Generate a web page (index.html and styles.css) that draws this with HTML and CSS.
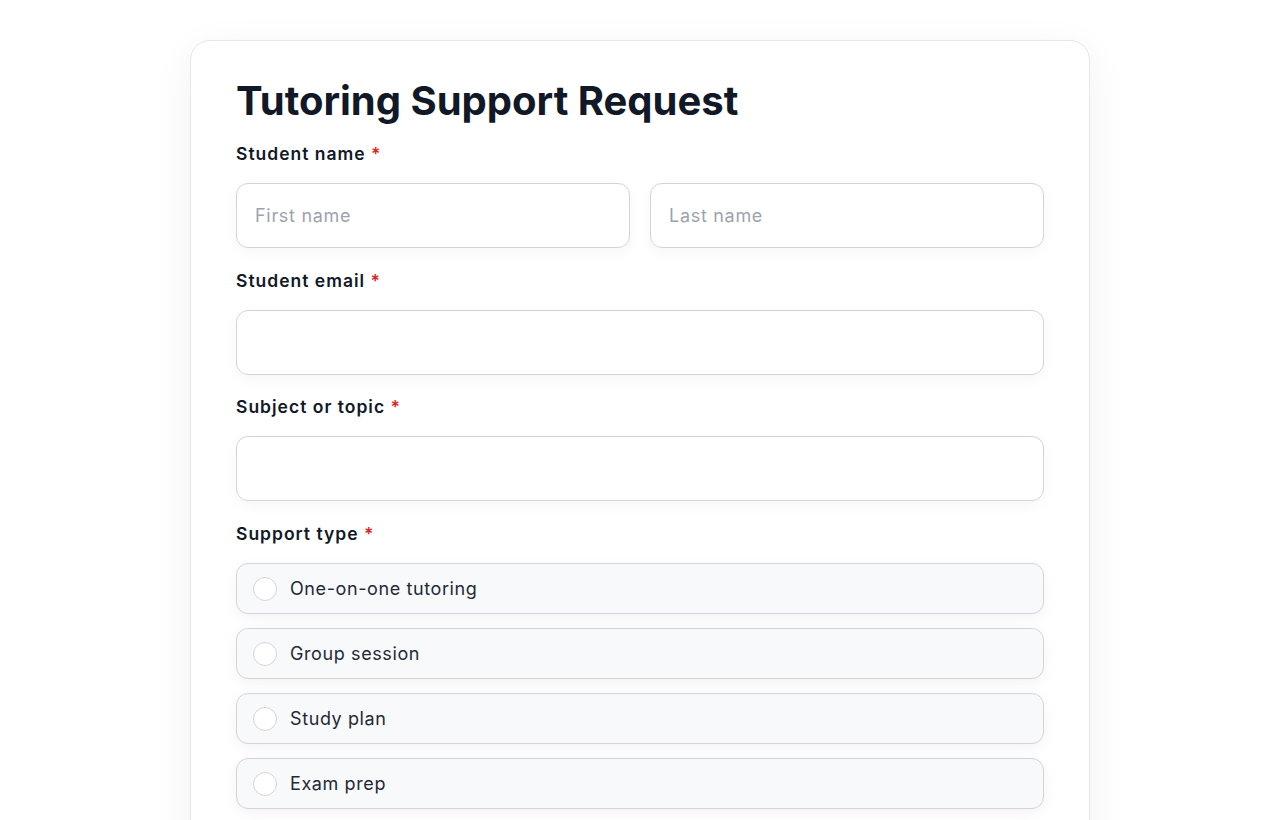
FILE: index.html
```html
<!DOCTYPE html>
<html lang="en">
<head>
  <meta charset="UTF-8" />
  <title>Tutoring Support Request</title>
  <link rel="stylesheet" href="styles.css">
</head>
<body>
  <div class="card">
    <h1>Tutoring Support Request</h1>

    <div class="field">
      <label class="label">Student name <span class="req">*</span></label>
      <div class="row">
        <input class="input" type="text" placeholder="First name">
        <input class="input" type="text" placeholder="Last name">
      </div>
    </div>

    <div class="field">
      <label class="label">Student email <span class="req">*</span></label>
      <input class="input" type="email">
    </div>

    <div class="field">
      <label class="label">Subject or topic <span class="req">*</span></label>
      <input class="input" type="text">
    </div>

    <div class="field">
      <label class="label">Support type <span class="req">*</span></label>
      <div class="options">
        <label class="option"><span class="radio"></span>One-on-one tutoring</label>
        <label class="option"><span class="radio"></span>Group session</label>
        <label class="option"><span class="radio"></span>Study plan</label>
        <label class="option"><span class="radio"></span>Exam prep</label>
      </div>
    </div>
  </div>
</body>
</html>
```

FILE: styles.css
```css
body {
  font-family: Inter, "Noto Sans", sans-serif;
  background-color: #ffffff;
  color: #111827;
  margin: 0;
  padding: 40px 0;
}

.card {
  width: 808px;
  margin: 0 auto;
  padding: 36px 45px 40px;
  background-color: #ffffff;
  border: 1px solid #e5e7eb;
  border-radius: 20px;
  box-shadow: 0 10px 40px rgba(17, 24, 39, 0.06);
}

h1 {
  font-size: 40px;
  line-height: 48px;
  font-weight: 700;
  margin: 0 0 18px;
  color: #111827;
}

.field {
  margin-bottom: 22px;
}

.field:nth-child(3) {
  margin-bottom: 21px;
}

.label {
  display: block;
  font-size: 17.5px;
  line-height: 22px;
  font-weight: 600;
  letter-spacing: 1px;
  margin-bottom: 18px;
  color: #111827;
}

.req {
  color: #dc2626;
}

.row {
  display: flex;
  gap: 20px;
}

.input {
  display: block;
  box-sizing: border-box;
  width: 100%;
  height: 65px;
  padding: 0 18px;
  font-family: inherit;
  font-size: 18px;
  letter-spacing: 0.7px;
  color: #111827;
  background-color: #ffffff;
  border: 1px solid #d1d5db;
  border-radius: 12px;
  box-shadow: 0 4px 14px rgba(17, 24, 39, 0.04);
}

.input::placeholder {
  color: #9ca3af;
}

.options {
  display: flex;
  flex-direction: column;
  gap: 14px;
}

.option {
  display: flex;
  align-items: center;
  gap: 13px;
  box-sizing: border-box;
  height: 51px;
  padding: 0 16px;
  font-size: 18px;
  letter-spacing: 0.6px;
  color: #1f2937;
  background-color: #f8f9fb;
  border: 1px solid #d1d5db;
  border-radius: 12px;
  box-shadow: 0 4px 14px rgba(17, 24, 39, 0.05);
}

.radio {
  width: 22px;
  height: 22px;
  border: 1px solid #d1d5db;
  border-radius: 50%;
  background-color: #ffffff;
}
```
